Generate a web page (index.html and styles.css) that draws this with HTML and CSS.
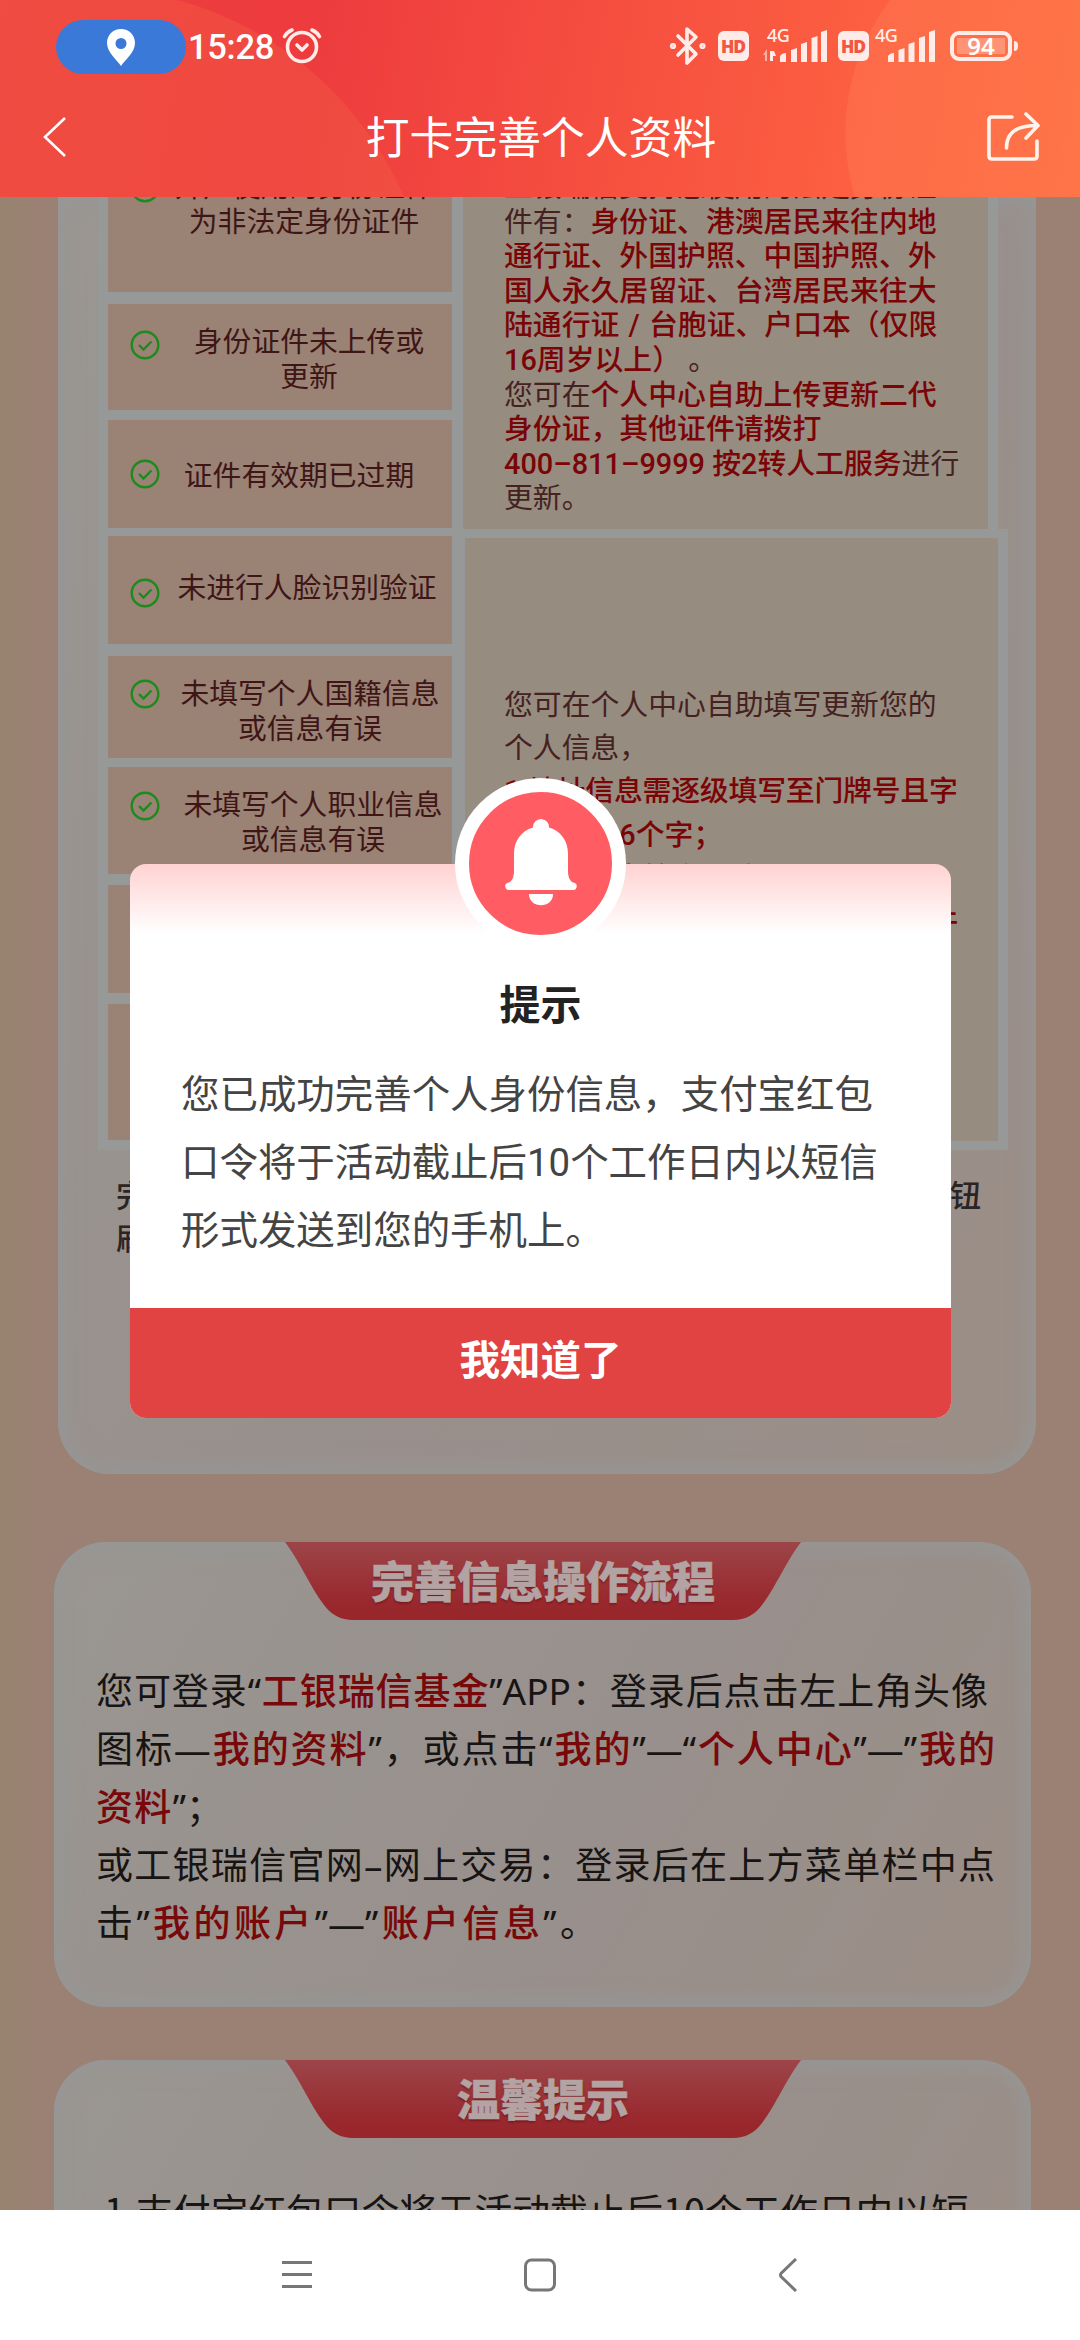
FILE: index.html
```html
<!DOCTYPE html>
<html lang="zh-CN">
<head>
<meta charset="utf-8">
<title>打卡完善个人资料</title>
<link rel="stylesheet" href="styles.css">
</head>
<body>
<div class="screen">
  <header class="header">
    <div class="status">
      <div class="status-left">
        <span class="pill"><svg width="28" height="37" viewBox="0 0 28 37"><path fill="#fff" fill-rule="evenodd" d="M14 0C6 0 0 6 0 14c0 9 9 16 14 23 5-7 14-14 14-23C28 6 22 0 14 0zm0 9a5.5 5.5 0 1 1 0 11 5.5 5.5 0 0 1 0-11z"/></svg></span>
        <span class="time">15:28</span>
        <svg class="alarm" width="40" height="38" viewBox="0 0 40 38" fill="none" stroke="#ffece8" stroke-width="3.6" stroke-linecap="round" stroke-linejoin="round"><circle cx="20" cy="20" r="14.5"/><path d="M15 18l5 5 5-5M2.5 9.5Q5 5 10 3M37.500 9.500Q35 5 30 3"/></svg>
      </div>
      <div class="status-right">
        <svg width="38" height="40" viewBox="0 0 38 40" fill="none" stroke="#ffece8" stroke-width="3.6" stroke-linejoin="round" stroke-linecap="round"><path d="M9 10l18 18-9 9V3l9 8L9 29"/><circle cx="4" cy="20" r="1.300"/><circle cx="33.500" cy="20" r="1.300"/></svg>
        <span class="hd">HD</span>
        <span class="net net-a"><i>4G</i><svg width="64" height="32" viewBox="0 0 64 32"><path fill="#ffece8" opacity=".6" d="M0 25l4-6v12H2v-6z"/><path fill="#ffece8" d="M7 21h4l2 5h-3v5H7zM17 26q2-3 6-3v9h-6zM28 20l6-2v14h-6zM38 14l6-2v20h-6zM48.500 8l6-2v26h-6zM58 2l6-2v32h-6z"/></svg></span>
        <span class="hd">HD</span>
        <span class="net net-b"><i>4G</i><svg width="60" height="32" viewBox="0 0 60 32"><path fill="#ffece8" d="M13 26q2-3 6-3v9h-6zM23.500 20l6-2v14h-6zM33.500 14l6-2v20h-6zM44 8l6-2v26h-6zM54 2l6-2v32h-6z"/></svg></span>
        <span class="battery"><b>94</b></span>
        <span class="nub"></span>
      </div>
    </div>
    <div class="titlebar">
      <svg width="24" height="40" viewBox="0 0 24 40" fill="none" stroke="#fff" stroke-width="2.600"><path d="M22 1L2 20l20 19"/></svg>
      <h1>打卡完善个人资料</h1>
      <svg width="54" height="52" viewBox="0 0 54 52" fill="none" stroke="#fff3ee" stroke-width="3.600" stroke-linecap="round" stroke-linejoin="round"><path d="M26 6H6Q3 6 3 9V45Q3 48 6 48H48Q51 48 51 45V30M20.500 37C20.500 22 30 14.500 51 14.500M40 3L52 14.500 40 27"/></svg>
    </div>
  </header>

  <main class="page">
    <section class="card card-table">
      <div class="table">
        <div class="col-left">
          <div class="cell c1"><svg class="ok" viewBox="0 0 30 30"><circle cx="15" cy="15" r="13.300"/><path d="M9 15l4.500 4.500 8-8"/></svg><p>开户使用的身份证件<br>为非法定身份证件</p></div>
          <div class="cell c2"><svg class="ok" viewBox="0 0 30 30"><circle cx="15" cy="15" r="13.300"/><path d="M9 15l4.500 4.500 8-8"/></svg><p>身份证件未上传或<br>更新</p></div>
          <div class="cell c3"><svg class="ok" viewBox="0 0 30 30"><circle cx="15" cy="15" r="13.300"/><path d="M9 15l4.500 4.500 8-8"/></svg><p>证件有效期已过期</p></div>
          <div class="cell c4"><svg class="ok" viewBox="0 0 30 30"><circle cx="15" cy="15" r="13.300"/><path d="M9 15l4.500 4.500 8-8"/></svg><p>未进行人脸识别验证</p></div>
          <div class="cell c5"><svg class="ok" viewBox="0 0 30 30"><circle cx="15" cy="15" r="13.300"/><path d="M9 15l4.500 4.500 8-8"/></svg><p>未填写个人国籍信息<br>或信息有误</p></div>
          <div class="cell c6"><svg class="ok" viewBox="0 0 30 30"><circle cx="15" cy="15" r="13.300"/><path d="M9 15l4.500 4.500 8-8"/></svg><p>未填写个人职业信息<br>或信息有误</p></div>
          <div class="cell c7"></div>
          <div class="cell c8"></div>
        </div>
        <div class="col-right">
          <div class="info info-a"><p>工银瑞信支持您使用的法定身份证<br>件有：<b>身份证、港澳居民来往内地</b><br><b>通行证、外国护照、中国护照、外</b><br><b>国人永久居留证、台湾居民来往大</b><br><b class="wide">陆通行证 / 台胞证、户口本（仅限</b><br><b>16周岁以上）</b> 。<br>您可在<b>个人中心自助上传更新二代</b><br><b>身份证，其他证件请拨打</b><br><b>400–811–9999 按2转人工服务</b>进行<br>更新。</p></div>
          <div class="info info-b"><p>您可在个人中心自助填写更新您的<br>个人信息，<br><b class="tight">1.地址信息需逐级填写至门牌号且字</b><br><b>数不少于6个字；</b><br>2.职业信息按实际填<br><b class="end">件</b></p></div>
        </div>
      </div>
      <p class="note"><span>完</span><span>钮</span></p>
      <p class="note note-2"><span>刷</span></p>
    </section>

    <section class="card card-flow">
      <h2 class="ribbon"><svg width="516" height="80" viewBox="0 0 516 80"><defs><linearGradient id="rg" x1="0" y1="0" x2="0" y2="1"><stop offset="0" stop-color="#9c4549"/><stop offset=".75" stop-color="#99292e"/><stop offset="1" stop-color="#98262b"/></linearGradient></defs><path fill="url(#rg)" d="M0 1H516C500 22 492 44 477 64Q466 79 448 79H68Q50 79 39 64C24 44 16 22 0 1z"/></svg><span>完善信息操作流程</span></h2>
      <div class="flow">
        <p class="l1">您可登录“<b>工银瑞信基金</b>”APP：登录后点击左上角头像</p>
        <p class="l2">图标—<b>我的资料</b>”，或点击“<b>我的</b>”—“<b>个人中心</b>”—”<b>我的</b></p>
        <p class="l3"><b>资料</b>”；</p>
        <p class="l4">或工银瑞信官网–网上交易：登录后在上方菜单栏中点</p>
        <p class="l5">击”<b>我的账户</b>”—”<b>账户信息</b>”。</p>
      </div>
    </section>

    <section class="card card-tips">
      <h2 class="ribbon"><svg width="516" height="80" viewBox="0 0 516 80"><path fill="url(#rg)" d="M0 1H516C500 22 492 44 477 64Q466 79 448 79H68Q50 79 39 64C24 44 16 22 0 1z"/></svg><span>温馨提示</span></h2>
      <p class="tip">1.支付宝红包口令将于活动截止后10个工作日内以短</p>
    </section>
  </main>

  <nav class="navbar">
    <svg width="30" height="30" viewBox="0 0 30 30" stroke="#777" stroke-width="3"><path d="M0 2.500h30M0 14.500h30M0 26.500h30"/></svg>
    <svg class="home" width="32" height="34" viewBox="0 0 32 34" fill="none" stroke="#777" stroke-width="3"><rect x="1.500" y="2" width="29" height="30" rx="6"/></svg>
    <svg width="20" height="34" viewBox="0 0 20 34" fill="none" stroke="#777" stroke-width="3"><path d="M18 1L3 15.500Q2 17 3 18.500L18 33"/></svg>
  </nav>

  <div class="dialog" role="dialog">
    <div class="bell"><svg width="72" height="90" viewBox="0 0 72 90" fill="#fff"><path d="M36 0a8 8 0 0 1 8 8.500C56 12 63 22 63 35V52C63 58 65 62 68 63.500 72 64 72.500 67 71 69.500Q70.500 71 68 71H4Q1.500 71 1 69.500C-.5 67 0 64 4 63.500 7 62 9 58 9 52V35C9 22 16 12 28 8.500A8 8 0 0 1 36 0z"/><path d="M24 75H48C48 90 24 90 24 75z"/></svg></div>
    <h3>提示</h3>
    <p>您已成功完善个人身份信息，支付宝红包<br>口令将于活动截止后10个工作日内以短信<br>形式发送到您的手机上。</p>
    <button>我知道了</button>
  </div>
</div>
</body>
</html>
```
FILE: styles.css
```css
* { box-sizing: border-box; margin: 0; padding: 0; }
body { width: 1080px; height: 2340px; overflow: hidden; }
body, button { font-family: Roboto, "Noto Sans CJK SC", sans-serif; }
svg { display: block; flex: none; }
.screen { position: relative; width: 1080px; height: 2340px; display: flex; flex-direction: column; overflow: hidden; }

/* header */
.header {
  height: 197px; flex: none; color: #fff;
  background:
    radial-gradient(circle at 85px 335px, rgba(243,98,68,.35) 347px, transparent 348px),
    radial-gradient(circle at 1066px 133px, rgba(255,133,90,.3) 220px, transparent 221px),
    linear-gradient(100deg, #ee3f40 0%, #ed3b3e 28%, #fd6041 80%, #ff6d40 100%);
}
.status { height: 92px; display: flex; justify-content: space-between; padding: 0 62px 0 56px; }
.status-left, .status-right { display: flex; align-items: center; }
.status-left { padding-top: 2px; }
.pill { width: 130px; height: 54px; border-radius: 27px; background: #3a79d8; display: flex; align-items: center; justify-content: center; }
.time { font-size: 34.500px; font-weight: 500; letter-spacing: -.3px; margin-left: 2px; width: 90px; }
.alarm { margin-left: 4px; margin-top: -2px; }
.hd { width: 31px; height: 30px; border-radius: 6px; background: #ffece8; color: #f4573f; font: 800 17.500px/30px "Open Sans", sans-serif; letter-spacing: -1px; text-align: center; flex: none; padding-right: 1px; }
.status-right > svg { margin-right: 11px; }
.net { display: flex; position: relative; height: 32px; }
.net i { position: absolute; font: 500 18px/18px "Noto Sans", sans-serif; top: -4px; color: #ffece8; letter-spacing: -.5px; }
.net-a { margin: 0 11px 0 14px; }
.net-a i { left: 4px; }
.net-b { margin: 0 15px 0 6px; }
.net-b i { left: 0; }
.battery { width: 62px; height: 30px; border: 4px solid #ffece8; border-radius: 9px; padding: 3px; color: #fff; display: flex; }
.battery b { flex: 1; background: rgba(255,255,255,.25); font: 600 24px/16px "Noto Sans", sans-serif; text-align: center; }
.nub { width: 4px; height: 10px; background: #ffece8; border-radius: 0 4px 4px 0; margin-left: 2px; }
.titlebar { height: 90px; display: flex; align-items: center; justify-content: space-between; padding: 0 40px 0 43px; }
.titlebar h1 { font-size: 43.8px; font-weight: 400; line-height: 60px; margin: 3px 0 0 29px; }

/* dimmed page */
.page { height: 2013px; flex: none; overflow: hidden; background: linear-gradient(90deg, #96836f 0, #9a8173 3%, #9a8173 100%); }
.card { background: linear-gradient(120deg, #9a9691, #98908d 55%, #9b8e86); box-shadow: inset 0 0 22px 5px #969797; }
.card-table { margin-left: 58px; width: 978px; height: 1277px; border-radius: 0 0 52px 52px; }
.table { height: 953px; margin-left: 40px; padding-left: 10px; width: 910px; display: flex; gap: 11px; background: linear-gradient(#979898, #979898) 0 0 / 900px 336px no-repeat, linear-gradient(#979898, #979898) 0 332px no-repeat; }
.col-left { width: 344px; display: flex; flex-direction: column; }
.cell { position: relative; flex: none; background: #9a8275; color: #3f1616; font-size: 28.800px; line-height: 34.700px; text-align: center; font-family: "Noto Sans CJK SC", sans-serif; }
.ok { position: absolute; left: 22px; width: 30px; height: 30px; fill: none; stroke: #1d8a1d; stroke-width: 2.400; }
.c1 { height: 95px; overflow: hidden; }
.c1 p { margin: -29px 0 0 48px; width: 296px; }
.c1 .ok { top: -24px; }
.c2 { height: 106px; margin-top: 12px; padding: 19px 0 0 58px; }
.c2 .ok { top: 26px; }
.c3 { height: 108px; margin-top: 10px; padding: 37px 0 0 38px; }
.c3 .ok { top: 39px; }
.c4 { height: 108px; margin-top: 8px; padding: 33px 0 0 54px; }
.c4 .ok { top: 42px; }
.c5 { height: 102px; margin-top: 12px; padding: 19px 0 0 60px; }
.c5 .ok { top: 23px; }
.c6 { height: 107px; margin-top: 9px; padding: 19px 0 0 66px; }
.c6 .ok { top: 24px; }
.c7 { height: 108px; margin-top: 11px; }
.c8 { height: 136px; margin-top: 11px; }
.col-right { display: flex; flex-direction: column; gap: 9px; font-family: Roboto, "Noto Sans CJK SC", sans-serif; }
.info { background: #978c80; color: #452220; font-size: 28.850px; white-space: nowrap; }
.info b { color: #7a0406; font-weight: 500; }
.info .wide { word-spacing: 2px; }
.info .tight { letter-spacing: -.2px; }
.info .end { display: block; width: 454px; text-align: right; }
.info-a { width: 525px; height: 332px; padding-left: 41px; line-height: 34.600px; }
.info-a p { margin-top: -27px; }
.info-b { margin-left: 2px; width: 533px; height: 603px; padding: 146px 0 0 39px; line-height: 43.200px; }
.note { display: flex; justify-content: space-between; padding: 22px 55px 0 58px; height: 65px; font: 500 31px/44px "Noto Sans CJK SC", sans-serif; color: #2a2422; }
.note-2 { padding-top: 0; height: 44px; }
.card-flow { margin: 68px 0 0 54px; width: 977px; height: 465px; border-radius: 52px; }
.card-tips { margin: 53px 0 0 54px; width: 977px; height: 300px; border-radius: 52px 52px 0 0; }
.ribbon { position: relative; width: 516px; height: 80px; margin-left: 231px; top: -1px; }
.ribbon span { position: absolute; inset: 0; text-align: center; font: 900 43px/76px "Noto Sans CJK SC", sans-serif; color: #b3a3a2; text-shadow: 0 2px 2px #7a1c20; -webkit-text-stroke: .6px #b3a3a2; }
.flow { padding: 40px 0 0 42px; color: #171413; font-size: 37px; line-height: 58px; font-family: "Noto Sans", "Noto Sans CJK SC", sans-serif; }
.flow b { color: #780809; font-weight: 500; }
.flow p { white-space: nowrap; text-align-last: justify; }
.l1 { width: 892px; } .l2 { width: 899px; } .l4 { width: 899px; }
.l3 { width: 127px; } .l5 { width: 501px; }
.tip { padding: 41px 0 0 50px; white-space: nowrap; font: 400 37.700px/58px "Noto Sans CJK SC", sans-serif; color: #171413; }

/* system navigation */
.navbar { height: 130px; flex: none; background: #fff; display: flex; justify-content: space-between; align-items: center; padding: 0 282px 0 282px; }
.home { margin-right: 10px; }

/* dialog */
.dialog { position: absolute; left: 130px; top: 864px; width: 821px; height: 554px; border-radius: 16px; background: linear-gradient(#ffd2d2, #fff 70px); display: flex; flex-direction: column; align-items: center; }
.bell { width: 171px; height: 171px; margin-top: -86px; border: 14px solid #fff; border-radius: 50%; background: #ff5c64; display: flex; align-items: center; justify-content: center; flex: none; }
.dialog h3 { font: 700 41px/60px "Noto Sans CJK SC", sans-serif; color: #222; margin-top: 23px; }
.dialog p { align-self: stretch; padding-left: 51px; margin-top: 29px; font-size: 38.450px; line-height: 68px; color: #444; white-space: nowrap; }
.dialog button { margin-top: auto; width: 100%; height: 110px; flex: none; border: 0; border-radius: 0 0 16px 16px; background: #e14242; color: #fff; font-size: 40.500px; font-weight: 700; padding-bottom: 11px; }
```
